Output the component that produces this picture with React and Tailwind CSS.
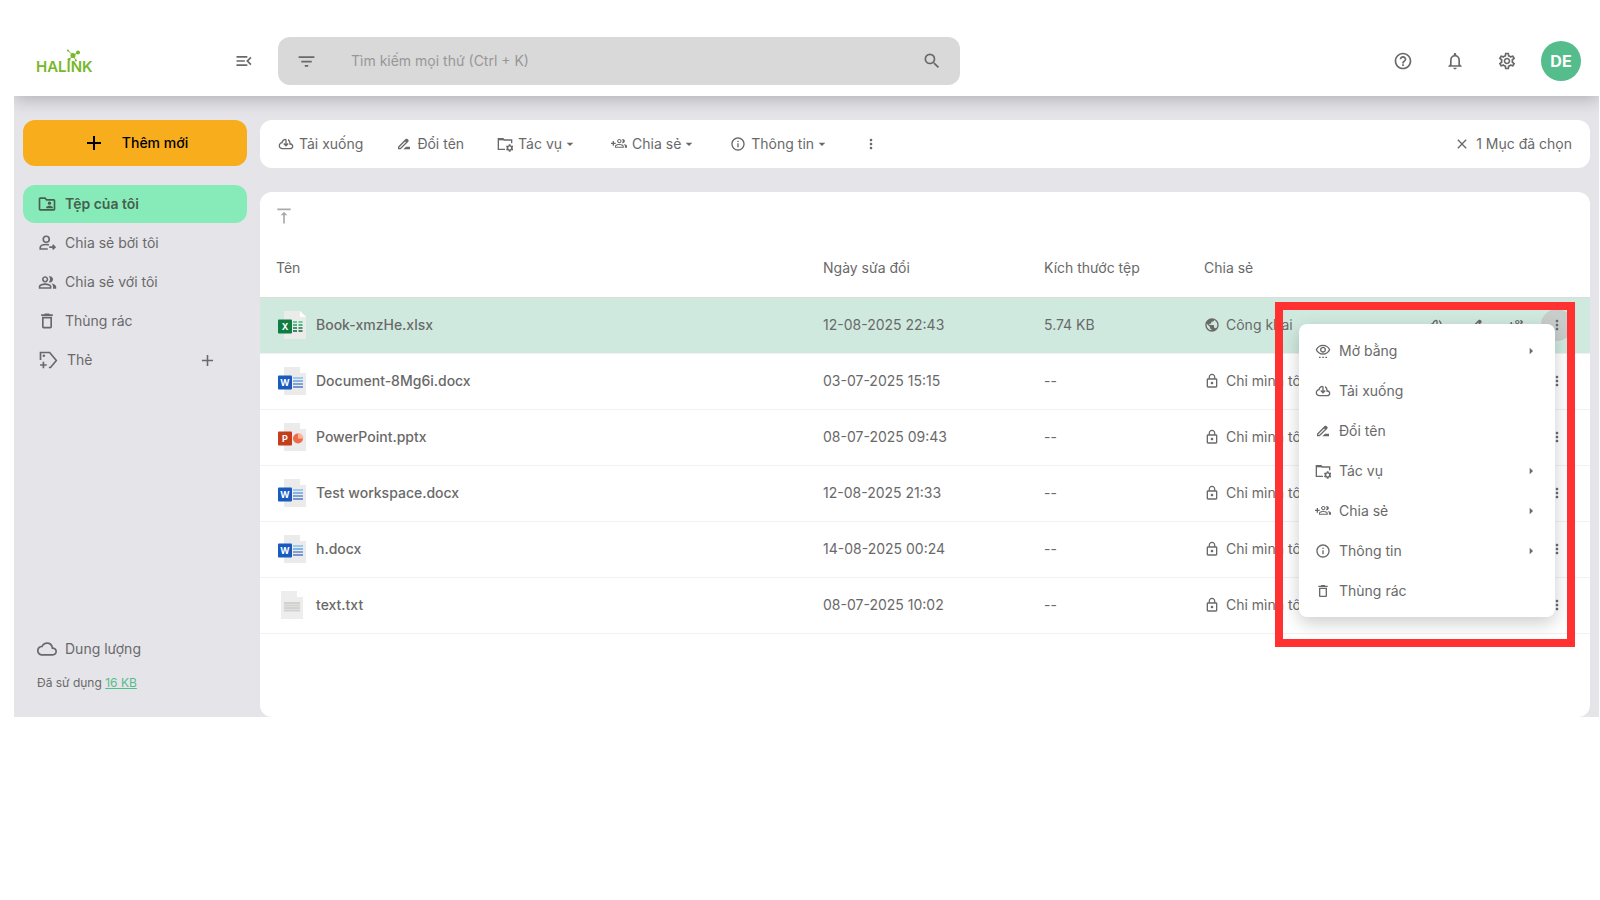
import React from 'react';
import {
    MdMenuOpen, MdFilterList, MdSearch, MdHelpOutline, MdNotificationsNone, MdOutlineSettings,
    MdAdd, MdClose, MdMoreVert, MdArrowDropDown, MdArrowRight, MdOutlineFolderShared,
    MdOutlinePeopleAlt, MdDeleteOutline, MdCloudQueue, MdInfoOutline, MdPublic, MdLockOutline,
    MdVerticalAlignTop, MdOutlineRemoveRedEye, MdDriveFileRenameOutline, MdSettings
} from 'react-icons/md';

const CloudDownloadIcon = ({ size = 16 }) => (
    <svg width={size} height={size} viewBox="0 -960 960 960" fill="currentColor" aria-hidden="true">
        <path d="M260-160q-91 0-155.500-63T40-377q0-78 47-139t123-78q17-72 85-137t145-65q33 0 56.500 23.500T520-716v242l64-62 56 56-160 160-160-160 56-56 64 62v-242q-76 14-118 73.500T280-520h-20q-58 0-99 41t-41 99q0 58 41 99t99 41h480q42 0 71-29t29-71q0-42-29-71t-71-29h-60v-80q0-48-22-89.500T600-680v-93q74 35 117 103.500T760-520q69 8 114.500 59.500T920-340q0 75-52.500 127.500T740-160H260Z" />
    </svg>
);

const FolderGearIcon = ({ size = 16 }) => (
    <svg width={size} height={size} viewBox="0 0 24 24" fill="none" stroke="currentColor" strokeWidth="2" aria-hidden="true">
        <path d="M12 20H2V4h7l2 2h11v5" />
        <path d="M2 5.500h8.500" />
        <MdSettings x="12" y="11" size={14} stroke="none" />
    </svg>
);

const GroupAddIcon = ({ size = 16 }) => (
    <svg width={size} height={size} viewBox="0 0 24 24" fill="none" stroke="currentColor" strokeWidth="2" aria-hidden="true">
        <path d="M0 11h7M3.500 7.500v7" />
        <MdOutlinePeopleAlt x="5" y="1" size={20} stroke="none" />
    </svg>
);

const OpenWithIcon = ({ size = 16 }) => (
    <svg width={size} height={size} viewBox="0 0 24 24" fill="currentColor" aria-hidden="true">
        <MdOutlineRemoveRedEye x="0" y="-2" size={24} />
        <path d="M6 20.500h2.500v2H6zM10.800 20.500h2.500v2h-2.500zM15.500 20.500H18v2h-2.500z" />
    </svg>
);

const PersonArrowIcon = ({ size = 18 }) => (
    <svg width={size} height={size} viewBox="0 0 24 24" fill="none" stroke="currentColor" strokeWidth="2.200" aria-hidden="true">
        <circle cx="11" cy="7" r="4" />
        <path d="M13 20H3v-2c0-2.500 4-4 8-4 1.500 0 2.500.2 3.500.5" />
        <path d="M15 17.500h7M19.500 14.500l3 3-3 3" />
    </svg>
);

const TagAddIcon = ({ size = 20 }) => (
    <svg width={size} height={size} viewBox="0 0 24 24" fill="none" stroke="currentColor" strokeWidth="2" aria-hidden="true">
        <path d="M3 12V3h11l8 9.500-7 8.500h-2" />
        <path d="M6.500 14v8M2.500 18h8" />
        <circle cx="7" cy="7" r="1.500" fill="currentColor" stroke="none" />
    </svg>
);

const Logo = () => (
    <svg width="64" height="32" viewBox="0 0 64 32" fill="#76b82a" aria-label="HALINK">
        <g stroke="#76b82a" strokeWidth="1">
            <path d="M37 10.500 32 5.500M37 10.500l5-3M37 10.500l-4 4M37 10.500l3 5" />
        </g>
        <circle cx="37" cy="10.500" r="2.500" />
        <circle cx="32" cy="5.500" r="1" />
        <circle cx="42" cy="7.500" r="2" />
        <circle cx="33" cy="14.500" r="1.500" />
        <circle cx="40" cy="15.500" r="1" />
        <text x="0" y="27" fontFamily="Inter, sans-serif" fontSize="15" fontWeight="600">HALINK</text>
    </svg>
);

const BADGES = {
    xlsx: { letter: 'X', color: '#107c41' },
    docx: { letter: 'W', color: '#185abd' },
    pptx: { letter: 'P', color: '#c43e1c' }
};

const FileIcon = ({ type }) => {
    if (type === 'txt') {
        return (
            <svg width="28" height="28" viewBox="0 0 28 28" aria-hidden="true">
                <path d="M3 0h16l6 6v22H3z" fill="#ededed" />
                <path d="M19 0v6h6z" fill="#fff" />
                <path d="M6 12h16M6 14.500h16M6 17h16M6 19.500h16" stroke="#d3d2cf" strokeWidth="2" />
            </svg>
        );
    }
    const { letter, color } = BADGES[type];
    return (
        <svg width="28" height="28" viewBox="0 0 28 28" aria-hidden="true">
            <path d="M6 0h16l6 6v22H6z" fill="#ebebeb" />
            <path d="M22 0v6h6z" fill="#fff" />
            {type === 'xlsx' && (
                <g strokeWidth="1.500">
                    <path d="M15 11h4M20.500 11h4" stroke="#33c481" />
                    <path d="M15 14h4M20.500 14h4" stroke="#21a366" />
                    <path d="M15 17h4M20.500 17h4" stroke="#107c41" />
                    <path d="M15 20h4M20.500 20h4" stroke="#185c37" />
                </g>
            )}
            {type === 'docx' && (
                <g strokeWidth="1.500">
                    <path d="M15 11h10" stroke="#7fc0f0" />
                    <path d="M15 14h10" stroke="#6a9fe0" />
                    <path d="M15 17h10" stroke="#5a8bd8" />
                    <path d="M15 20h10" stroke="#5577c4" />
                </g>
            )}
            {type === 'pptx' && (
                <g>
                    <circle cx="20" cy="15.500" r="5" fill="#ed6c47" />
                    <path d="M20 15.500V10a5.500 5.500 0 0 1 5.500 5.500z" fill="#ffb59d" />
                </g>
            )}
            <rect x="0" y="8.500" width="14" height="14" rx="1" fill={color} />
            <text x="7" y="19" textAnchor="middle" fontFamily="Inter, sans-serif" fontSize="9" fontWeight="700" fill="#fff">{letter}</text>
        </svg>
    );
};

const navItems = [
    { label: 'Tệp của tôi', icon: <MdOutlineFolderShared size={20} />, active: true },
    { label: 'Chia sẻ bởi tôi', icon: <PersonArrowIcon /> },
    { label: 'Chia sẻ với tôi', icon: <MdOutlinePeopleAlt size={19} /> },
    { label: 'Thùng rác', icon: <MdDeleteOutline size={20} /> }
];

const toolbarItems = [
    { label: 'Tải xuống', icon: <CloudDownloadIcon /> },
    { label: 'Đổi tên', icon: <MdDriveFileRenameOutline size={16} /> },
    { label: 'Tác vụ', icon: <FolderGearIcon />, menu: true },
    { label: 'Chia sẻ', icon: <GroupAddIcon />, menu: true },
    { label: 'Thông tin', icon: <MdInfoOutline size={16} />, menu: true }
];

const menuItems = [
    { label: 'Mở bằng', icon: <OpenWithIcon />, sub: true },
    { label: 'Tải xuống', icon: <CloudDownloadIcon /> },
    { label: 'Đổi tên', icon: <MdDriveFileRenameOutline size={16} /> },
    { label: 'Tác vụ', icon: <FolderGearIcon />, sub: true },
    { label: 'Chia sẻ', icon: <GroupAddIcon />, sub: true },
    { label: 'Thông tin', icon: <MdInfoOutline size={16} />, sub: true },
    { label: 'Thùng rác', icon: <MdDeleteOutline size={16} /> }
];

const files = [
    { name: 'Book-xmzHe.xlsx', type: 'xlsx', date: '12-08-2025 22:43', size: '5.74 KB', shared: true, selected: true },
    { name: 'Document-8Mg6i.docx', type: 'docx', date: '03-07-2025 15:15', size: '--' },
    { name: 'PowerPoint.pptx', type: 'pptx', date: '08-07-2025 09:43', size: '--' },
    { name: 'Test workspace.docx', type: 'docx', date: '12-08-2025 21:33', size: '--' },
    { name: 'h.docx', type: 'docx', date: '14-08-2025 00:24', size: '--' },
    { name: 'text.txt', type: 'txt', date: '08-07-2025 10:02', size: '--' }
];

const Header = () => (
    <header className="relative z-10 flex h-[70px] items-center bg-white pl-[22px] pr-[18px] shadow-[0_4px_16px_rgba(0,0,0,0.22)]">
        <div className="flex w-[242px] items-center justify-between pr-6">
            <a href="#" aria-label="HALINK"><Logo /></a>
            <button type="button" aria-label="Thu gọn"><MdMenuOpen size={20} /></button>
        </div>
        <form className="flex h-12 w-[682px] items-center rounded-xl bg-[#d9d9d9] pl-[18px] pr-[18px]">
            <button type="button" aria-label="Bộ lọc"><MdFilterList size={21} /></button>
            <input
                type="text"
                aria-label="Tìm kiếm"
                placeholder="Tìm kiếm mọi thứ (Ctrl + K)"
                className="ml-[34px] min-w-0 flex-1 bg-transparent outline-none placeholder:text-[#979797]"
            />
            <button type="button" aria-label="Tìm"><MdSearch size={20} /></button>
        </form>
        <div className="ml-auto flex items-center">
            <button type="button" aria-label="Trợ giúp" className="mr-8"><MdHelpOutline size={20} /></button>
            <button type="button" aria-label="Thông báo" className="mr-8"><MdNotificationsNone size={20} /></button>
            <button type="button" aria-label="Cài đặt" className="mr-6"><MdOutlineSettings size={20} /></button>
            <button type="button" className="flex h-10 w-10 items-center justify-center rounded-full bg-[#55bd8b] text-base font-bold text-white">DE</button>
        </div>
    </header>
);

const Sidebar = () => (
    <aside className="flex w-[224px] shrink-0 flex-col">
        <button type="button" className="flex h-[46px] items-center justify-center gap-4 rounded-xl bg-[#f8ad1d] font-medium text-black">
            <MdAdd size={24} /> Thêm mới
        </button>
        <nav className="mt-[19px] flex flex-col gap-px">
            {navItems.map((item) => (
                <a
                    key={item.label}
                    href="#"
                    className={`flex h-[38px] items-center rounded-xl pl-[14px] ${item.active ? 'bg-[#87ebb9] font-semibold text-[#45604f]' : ''}`}
                >
                    <span className="mr-2 flex w-5 justify-center">{item.icon}</span>
                    {item.label}
                </a>
            ))}
            <div className="flex h-[38px] items-center pl-[15px] pr-[30px]">
                <a href="#" className="flex items-center gap-[9px]"><TagAddIcon /> Thẻ</a>
                <button type="button" aria-label="Thêm thẻ" className="ml-auto"><MdAdd size={19} /></button>
            </div>
        </nav>
        <div className="mt-auto pb-[26px] pl-[14px]">
            <div className="flex items-center gap-2"><MdCloudQueue size={20} /> Dung lượng</div>
            <p className="mt-4 text-xs leading-4">Đã sử dụng <a href="#" className="text-[#55bd8b] underline">16 KB</a></p>
        </div>
    </aside>
);

const Toolbar = () => (
    <div className="flex h-12 items-center rounded-xl bg-white pl-[18px] pr-[18px]">
        <div className="flex items-center gap-[33px]">
            {toolbarItems.map((item) => (
                <button key={item.label} type="button" className="flex items-center">
                    <span className="mr-[5px] flex w-4 justify-center">{item.icon}</span>
                    {item.label}
                    {item.menu && <MdArrowDropDown size={16} />}
                </button>
            ))}
            <button type="button" aria-label="Thêm"><MdMoreVert size={16} /></button>
        </div>
        <button type="button" className="ml-auto flex items-center gap-1.5"><MdClose size={16} /> 1 Mục đã chọn</button>
    </div>
);

const FileRow = ({ file }) => (
    <tr className={`h-14 border-b border-[#f1f1f1] ${file.selected ? 'bg-[#d0e9df]' : ''}`}>
        <td className="pl-[18px]">
            <div className="flex items-center gap-[10px] font-medium"><FileIcon type={file.type} /> {file.name}</div>
        </td>
        <td className="pl-4">{file.date}</td>
        <td className="pl-4">{file.size}</td>
        <td className="pl-4">
            <div className="flex items-center gap-[6px] whitespace-nowrap">
                {file.shared ? <MdPublic size={16} /> : <MdLockOutline size={16} />}
                {file.shared ? 'Công khai' : 'Chỉ mình tôi'}
            </div>
        </td>
        <td className="pr-[17px]">
            <div className="flex justify-end gap-2">
                {file.selected && (
                    <>
                        <button type="button" aria-label="Tải xuống" className="flex h-8 w-8 items-center justify-center"><CloudDownloadIcon /></button>
                        <button type="button" aria-label="Đổi tên" className="flex h-8 w-8 items-center justify-center"><MdDriveFileRenameOutline size={16} /></button>
                        <button type="button" aria-label="Chia sẻ" className="flex h-8 w-8 items-center justify-center"><GroupAddIcon /></button>
                    </>
                )}
                <button
                    type="button"
                    aria-label="Tùy chọn"
                    className={`flex h-8 w-8 items-center justify-center rounded-full ${file.selected ? 'bg-[#c6cdca]' : ''}`}
                >
                    <MdMoreVert size={16} />
                </button>
            </div>
        </td>
    </tr>
);

const ContextMenu = () => (
    <div className="absolute right-[35px] top-[132px] w-64 rounded-lg bg-white pb-1.5 pt-[7px] shadow-[0_6px_18px_rgba(0,0,0,0.2)]">
        {menuItems.map((item) => (
            <button key={item.label} type="button" className="flex h-10 w-full items-center pl-4 pr-4">
                <span className="mr-2 flex w-4 justify-center">{item.icon}</span>
                {item.label}
                {item.sub && <MdArrowRight size={16} className="ml-auto" />}
            </button>
        ))}
    </div>
);

const App = () => (
    <div className="min-h-screen bg-white pt-[26px] font-['Inter',sans-serif] text-sm text-[#696969]">
        <div className="ml-[14px] mr-px overflow-hidden bg-[#e5e4e9]">
            <Header />
            <div className="flex gap-[13px] pl-[9px] pr-[9px] pt-6">
                <Sidebar />
                <main className="min-w-0 flex-1">
                    <Toolbar />
                    <section className="relative mt-6 rounded-xl bg-white pb-[83px]">
                        <div className="flex h-12 items-center pl-[14px] text-[#aaa]">
                            <button type="button" aria-label="Tải lên"><MdVerticalAlignTop size={20} /></button>
                        </div>
                        <table className="w-full table-fixed text-left">
                            <colgroup>
                                <col />
                                <col className="w-[221px]" />
                                <col className="w-[160px]" />
                                <col className="w-[210px]" />
                                <col className="w-[192px]" />
                            </colgroup>
                            <thead>
                                <tr className="h-[57px] border-b border-[#dcdcdc]">
                                    <th className="pl-4 font-normal">Tên</th>
                                    <th className="pl-4 font-normal">Ngày sửa đổi</th>
                                    <th className="pl-4 font-normal">Kích thước tệp</th>
                                    <th className="pl-4 font-normal">Chia sẻ</th>
                                    <th />
                                </tr>
                            </thead>
                            <tbody>
                                {files.map((file) => <FileRow key={file.name} file={file} />)}
                            </tbody>
                        </table>
                        <ContextMenu />
                        {/* Highlight frame around the open menu */}
                        <div className="pointer-events-none absolute right-[15px] top-[110px] h-[345px] w-[300px] border-8 border-[#ff3131]" />
                    </section>
                </main>
            </div>
        </div>
    </div>
);

export default App;
